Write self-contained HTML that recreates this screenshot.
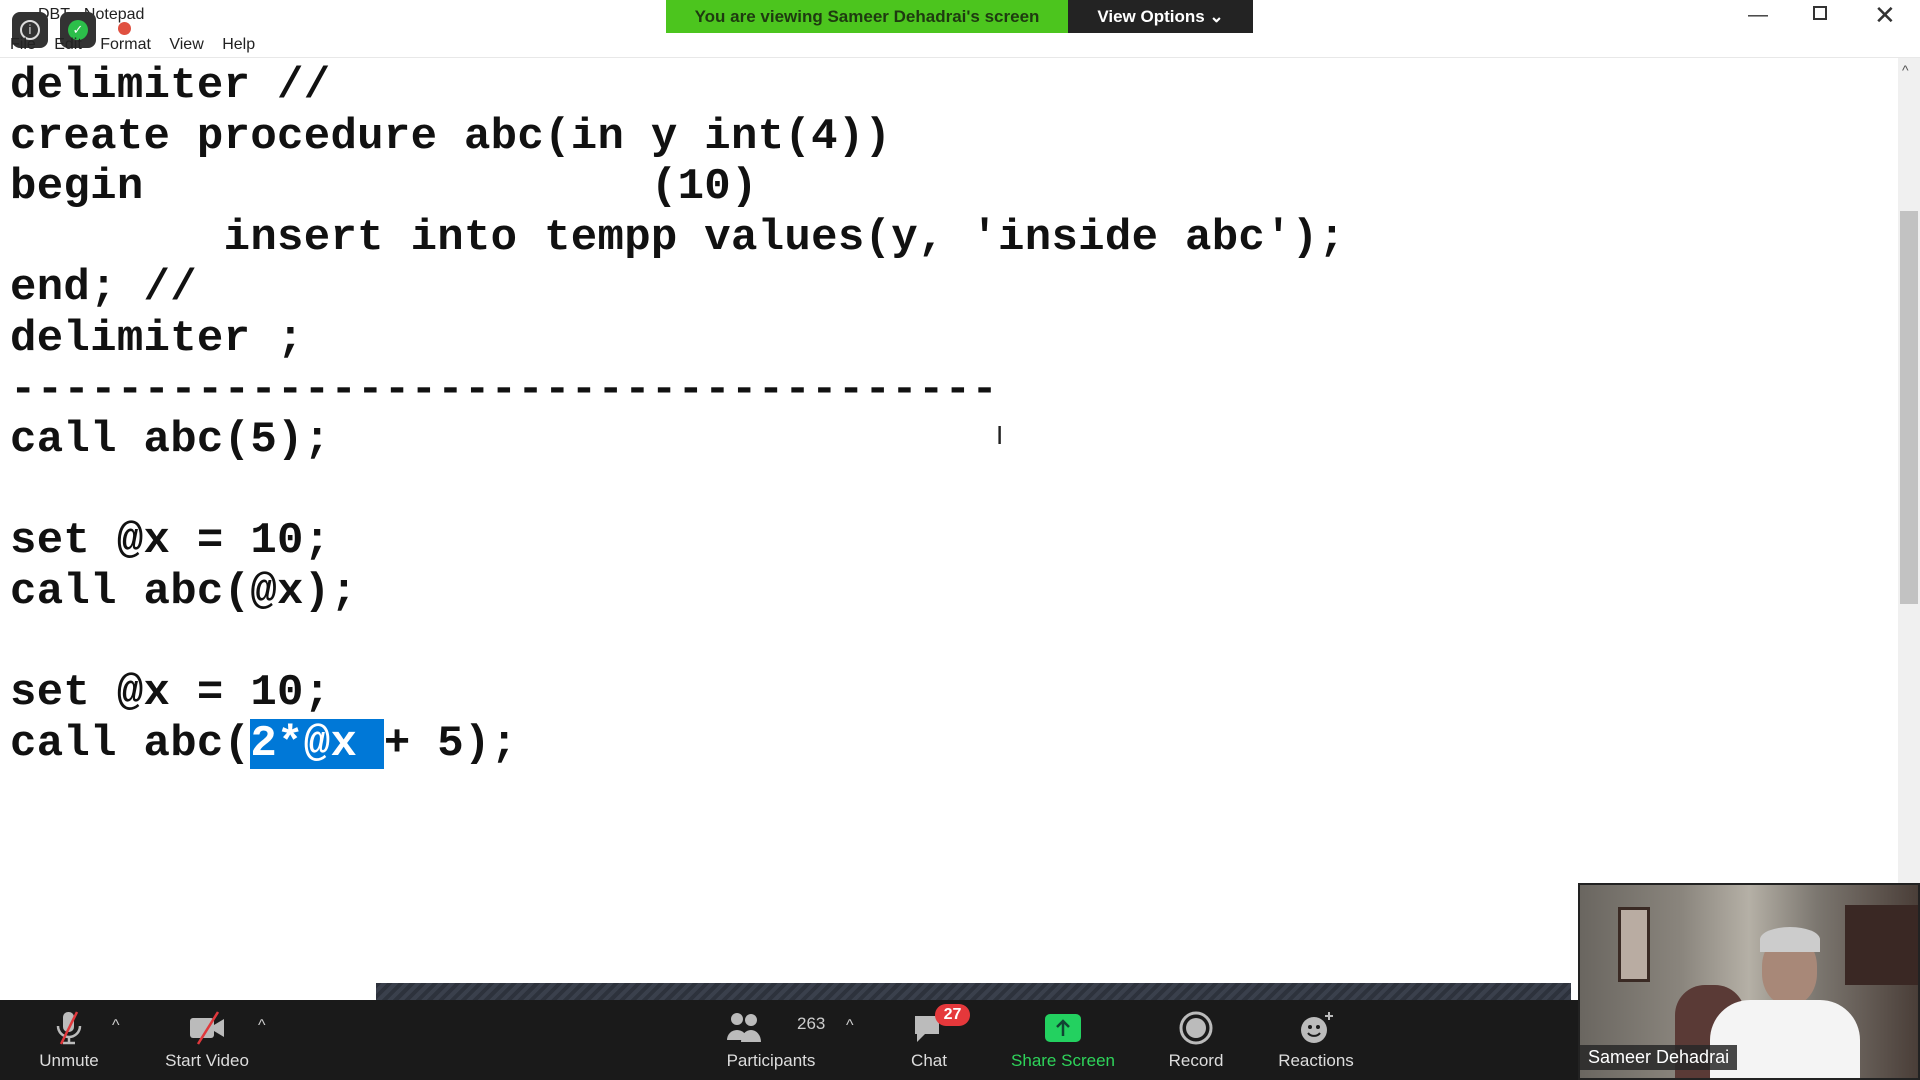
<!DOCTYPE html>
<html><head><meta charset="utf-8"><style>
*{margin:0;padding:0;box-sizing:border-box}
body{width:1920px;height:1080px;overflow:hidden;background:#fff;position:relative;font-family:"Liberation Sans",sans-serif}
.abs{position:absolute}
pre{position:absolute;left:10px;top:61px;font-family:"Liberation Mono",monospace;font-weight:bold;font-size:44px;letter-spacing:0.3px;line-height:50.6px;color:#111}
.sel{background:#0078d7;color:#fff}
.tb{position:absolute;top:1000px;left:0;width:1920px;height:80px;background:#1a1a1a}
.it{position:absolute;top:1051px;font-size:17px;color:#ddd;transform:translateX(-50%);white-space:nowrap}
.ic{position:absolute;top:1010px;transform:translateX(-50%)}
</style></head><body>
<div class="abs" style="left:0;top:0;width:1920px;height:58px;background:#fff;border-bottom:1px solid #e8e8e8"></div>
<div class="abs" style="left:38px;top:6px;font-size:16px;color:#222">DBT - Notepad</div>
<div class="abs" style="left:12px;top:12px;width:36px;height:36px;border-radius:8px;background:#333"></div>
<div class="abs" style="left:20px;top:20px;width:20px;height:20px;border-radius:50%;border:2px solid #ddd;color:#ddd;font-size:13px;text-align:center;line-height:16px">i</div>
<div class="abs" style="left:60px;top:12px;width:36px;height:36px;border-radius:8px;background:#333"></div>
<div class="abs" style="left:68px;top:20px;width:20px;height:20px;border-radius:50%;background:#2cbf4a;color:#fff;font-size:13px;text-align:center;line-height:20px">✓</div>
<div class="abs" style="left:118px;top:22px;width:13px;height:13px;border-radius:50%;background:#e05040"></div>
<div class="abs" style="left:10px;top:36px;font-size:16px;color:#222;word-spacing:14px">File Edit Format View Help</div>
<div class="abs" style="left:666px;top:0;width:402px;height:33px;background:#4cc51e;color:#1e3b10;font-size:17px;font-weight:bold;line-height:33px;text-align:center">You are viewing Sameer Dehadrai's screen</div>
<div class="abs" style="left:1068px;top:0;width:185px;height:33px;background:#232323;color:#fff;font-size:17px;font-weight:bold;line-height:33px;text-align:center">View Options ⌄</div>
<div class="abs" style="left:1748px;top:4px;font-size:20px;color:#333">—</div>
<div class="abs" style="left:1813px;top:6px;width:14px;height:14px;border:2px solid #333"></div>
<div class="abs" style="left:1874px;top:0;font-size:26px;color:#333">✕</div>
<div class="abs" style="left:1898px;top:58px;width:22px;height:925px;background:#f0f0f0"></div>
<div class="abs" style="left:1900px;top:211px;width:18px;height:393px;background:#c2c2c2"></div>
<div class="abs" style="left:1902px;top:62px;font-size:14px;color:#555">^</div>
<pre>delimiter //
create procedure abc(in y int(4))
begin                   (10)
        insert into tempp values(y, 'inside abc');
end; //
delimiter ;
-------------------------------------
call abc(5);

set @x = 10;
call abc(@x);

set @x = 10;
call abc(<span class="sel">2*@x </span>+ 5);</pre>
<div class="abs" style="left:996px;top:420px;font-size:26px;color:#222">I</div>
<div class="abs" style="left:376px;top:983px;width:1195px;height:17px;background:repeating-linear-gradient(135deg,#2d323c 0 4px,#3a404c 4px 8px)"></div>
<div class="tb"></div>
<svg class="ic" style="left:69px" width="40" height="36" viewBox="0 0 40 36"><rect x="14" y="2" width="11" height="20" rx="5" fill="#bbb"/><path d="M9 16a11 11 0 0 0 22 0M20 27v6M14 33h12" stroke="#bbb" stroke-width="2.5" fill="none"/><path d="M28 2L12 34" stroke="#e0383c" stroke-width="2.5"/></svg>
<div class="abs" style="left:112px;top:1017px;color:#ccc;font-size:16px">^</div>
<svg class="ic" style="left:207px" width="42" height="36" viewBox="0 0 42 36"><rect x="4" y="8" width="24" height="20" rx="3" fill="#bbb"/><path d="M28 15l10-6v18l-10-6z" fill="#bbb"/><path d="M32 2L12 34" stroke="#e0383c" stroke-width="2.5"/></svg>
<div class="abs" style="left:258px;top:1017px;color:#ccc;font-size:16px">^</div>
<svg class="ic" style="left:771px;margin-left:-25px" width="42" height="36" viewBox="0 0 42 36"><circle cx="12" cy="9" r="6" fill="#bbb"/><path d="M2 30a10 10 0 0 1 20 0z" fill="#bbb"/><circle cx="26" cy="10" r="6" fill="#bbb"/><path d="M16 32a10 12 0 0 1 20 0z" fill="#bbb"/></svg>
<div class="abs" style="left:797px;top:1014px;color:#ccc;font-size:17px">263</div>
<div class="abs" style="left:846px;top:1017px;color:#ccc;font-size:16px">^</div>
<svg class="ic" style="left:929px" width="40" height="36" viewBox="0 0 40 36"><path d="M6 6h24v18H16l-8 8v-8H6z" fill="#bbb"/></svg>
<div class="abs" style="left:935px;top:1004px;width:35px;height:22px;border-radius:11px;background:#e5383b;color:#fff;font-size:16px;font-weight:bold;text-align:center;line-height:22px">27</div>
<svg class="ic" style="left:1063px" width="40" height="36" viewBox="0 0 40 36"><rect x="2" y="4" width="36" height="28" rx="5" fill="#23d160"/><path d="M20 26V11M14 17l6-6 6 6" stroke="#143" stroke-width="2.5" fill="none"/></svg>
<svg class="ic" style="left:1196px" width="40" height="36" viewBox="0 0 40 36"><circle cx="20" cy="18" r="15" fill="none" stroke="#bbb" stroke-width="3"/><circle cx="20" cy="18" r="10" fill="#bbb"/></svg>
<svg class="ic" style="left:1316px" width="40" height="36" viewBox="0 0 40 36"><circle cx="18" cy="20" r="13" fill="#bbb"/><circle cx="14" cy="17" r="2" fill="#1a1a1a"/><circle cx="22" cy="17" r="2" fill="#1a1a1a"/><path d="M12 23a7 6 0 0 0 12 0" stroke="#1a1a1a" stroke-width="2" fill="none"/><path d="M33 2v8M29 6h8" stroke="#bbb" stroke-width="2"/></svg>
<div class="it" style="left:69px">Unmute</div>
<div class="it" style="left:207px">Start Video</div>
<div class="it" style="left:771px">Participants</div>
<div class="it" style="left:929px">Chat</div>
<div class="it" style="left:1063px;color:#2ed35a">Share Screen</div>
<div class="it" style="left:1196px">Record</div>
<div class="it" style="left:1316px">Reactions</div>
<div class="abs" style="left:1578px;top:883px;width:342px;height:197px;background:#222;padding:2px">
<div style="position:relative;width:100%;height:100%;overflow:hidden;background:linear-gradient(90deg,#6a6660 0%,#8a857d 30%,#b5b0a6 50%,#7c7770 70%,#4a3e38 100%)">
<div class="abs" style="left:38px;top:22px;width:32px;height:75px;border:3px solid #3a2a24;background:#b9aca2"></div>
<div class="abs" style="left:95px;top:100px;width:70px;height:100px;background:#5a3a36;border-radius:30px 30px 0 0"></div>
<div class="abs" style="left:182px;top:50px;width:55px;height:70px;border-radius:45%;background:#a88878"></div>
<div class="abs" style="left:180px;top:42px;width:60px;height:25px;border-radius:50% 50% 0 0;background:#ccc"></div>
<div class="abs" style="left:130px;top:115px;width:150px;height:90px;background:#f4f4f4;border-radius:40px 40px 0 0"></div>
<div class="abs" style="left:265px;top:20px;width:75px;height:80px;background:#3a2824"></div>
<div class="abs" style="left:0;top:160px;padding:2px 8px;background:rgba(40,40,40,.85);color:#fff;font-size:18px">Sameer Dehadrai</div>
</div></div>
</body></html>
